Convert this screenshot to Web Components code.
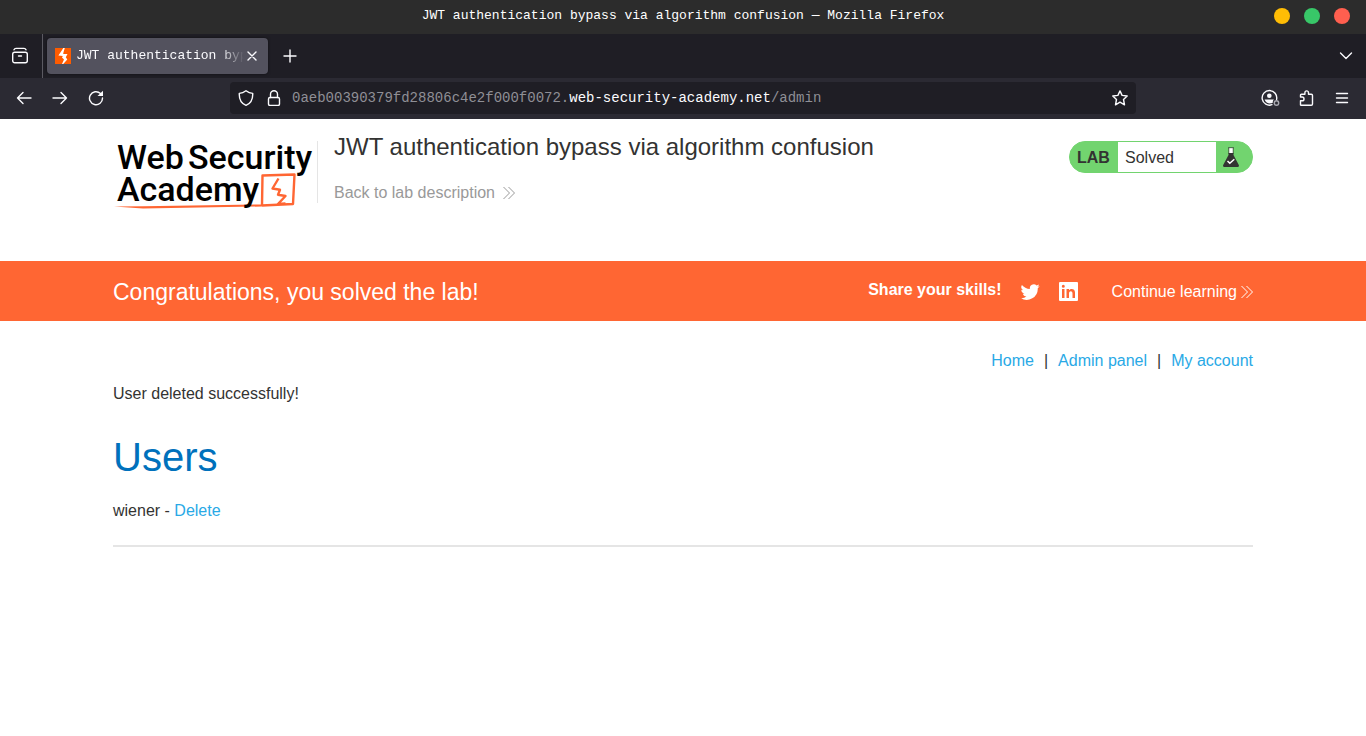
<!DOCTYPE html>
<html lang="en">
<head>
<meta charset="utf-8">
<title>JWT authentication bypass via algorithm confusion</title>
<style>
  html, body { margin: 0; }
  body { background: #fff; color: #333332; font: 16px/24px "Liberation Sans", Arial, sans-serif; }
</style>
</head>
<body>
<window-titlebar>JWT authentication bypass via algorithm confusion — Mozilla Firefox</window-titlebar>
<browser-tabs>JWT authentication bypass via algorithm confusion</browser-tabs>
<browser-toolbar><span slot="subdomain">0aeb00390379fd28806c4e2f000f0072.</span><span slot="host">web-security-academy.net</span><span slot="path">/admin</span></browser-toolbar>
<lab-header>
  <span slot="title">JWT authentication bypass via algorithm confusion</span>
  <lab-status slot="status">Solved</lab-status>
</lab-header>
<solved-banner>Congratulations, you solved the lab!</solved-banner>
<lab-content>
  <site-nav slot="nav"></site-nav>
  <span slot="message">User deleted successfully!</span>
  <user-row>wiener</user-row>
</lab-content>

<script>
const define = (name, html) => {
  const template = document.createElement('template');
  template.innerHTML = html;
  customElements.define(name, class extends HTMLElement {
    constructor() {
      super();
      this.attachShadow({ mode: 'open' }).append(template.content.cloneNode(true));
    }
  });
};

define('window-titlebar', `
<style>
  :host { display: grid; grid-template-columns: 1fr auto 1fr; align-items: center; box-sizing: border-box; height: 34px; padding: 0 16px 2px; background: #2c2c2c; color: #fff; font: 13px/20px "Liberation Mono", monospace; }
  .title { grid-column: 2; white-space: nowrap; }
  .controls { display: flex; gap: 14px; justify-content: flex-end; }
  button { width: 16px; height: 16px; padding: 0; border: 0; border-radius: 50%; }
  .min { background: #ffbd05; } .max { background: #38c768; } .close { background: #ff5f4f; }
</style>
<span class="title"><slot></slot></span>
<div class="controls"><button class="min" aria-label="Minimize"></button><button class="max" aria-label="Maximize"></button><button class="close" aria-label="Close"></button></div>`);

define('browser-tabs', `
<style>
  :host { display: flex; align-items: center; height: 44px; background: #1f1e25; color: #fbfbfe; font: 13px/20px "Liberation Mono", monospace; }
  button { display: grid; place-items: center; padding: 0; border: 0; background: none; color: inherit; }
  svg { display: block; fill: none; stroke: currentColor; stroke-width: 1.4; stroke-linecap: round; stroke-linejoin: round; }
  .view { width: 43px; height: 44px; padding-right: 2px; border-right: 1px solid #5b5a62; }
  .tab { display: flex; align-items: center; box-sizing: border-box; width: 221px; height: 36px; margin-left: 4px; padding: 0 8px; border-radius: 4px; background: #53525e; box-shadow: 0 0 3px #0008; }
  .label { flex: 1; min-width: 0; margin-left: 5px; overflow: hidden; white-space: nowrap; mask-image: linear-gradient(to left, transparent, #000 24px); }
  .tab button { width: 16px; height: 16px; }
  .add { width: 44px; height: 36px; }
  .list { width: 40px; height: 36px; margin-left: auto; }
</style>
<button class="view" aria-label="View recent browsing"><svg width="18" height="18" viewBox="0 0 18 18"><rect x="1.7" y="5.2" width="14.6" height="10.6" rx="2"/><path d="M3 2.8C3.4 1.8 4 1.4 5 1.4h8c1 0 1.600.4 2 1.400M7.500 9h3"/></svg></button>
<div class="tab">
  <svg width="16" height="16" viewBox="0 0 16 16" style="stroke:none"><path fill="#ff5c00" d="M0 0h16v16H0z"/><path fill="#fff" d="M8.300 0h1.500L8.500 4.300 8.200 6h4.300L10.800 9.300l1.500 2.200L8.200 16H7l2-4.500L7 9.500l.8-1.500L3.400 7.600 6.400 3z"/></svg>
  <span class="label"><slot></slot></span>
  <button aria-label="Close tab"><svg width="12" height="12" viewBox="0 0 12 12"><path d="m2 2 8 8M10 2l-8 8"/></svg></button>
</div>
<button class="add" aria-label="New tab"><svg width="14" height="14" viewBox="0 0 14 14"><path d="M7 1v12M1 7h12"/></svg></button>
<button class="list" aria-label="List all tabs"><svg width="14" height="8" viewBox="0 0 14 8"><path d="m1.500 1 5.500 5.500L12.500 1"/></svg></button>`);

define('browser-toolbar', `
<style>
  :host { display: grid; grid-template-columns: 1fr minmax(0, 906px) 1fr; align-items: center; box-sizing: border-box; height: 41px; padding: 0 8px 1px; background: #2b2a33; color: #fbfbfe; font: 14px/20px "Liberation Mono", monospace; }
  button { display: grid; place-items: center; width: 32px; height: 32px; padding: 0; border: 0; background: none; color: inherit; }
  svg { display: block; fill: none; stroke: currentColor; stroke-width: 1.4; stroke-linecap: round; stroke-linejoin: round; }
  .group { display: flex; gap: 4px; }
  .end { justify-content: flex-end; }
  .bar { display: flex; align-items: center; height: 32px; border-radius: 4px; background: #1f1e25; }
  .bar button + button { width: 24px; }
  .url { flex: 1; min-width: 0; padding-left: 6px; overflow: hidden; white-space: nowrap; color: #8f8f96; outline: 0; }
  .host { color: #fbfbfe; }
</style>
<div class="group">
  <button aria-label="Back"><svg width="16" height="16" viewBox="0 0 16 16"><path d="M15 8H1.500M7 2.500 1.500 8 7 13.500"/></svg></button>
  <button aria-label="Forward"><svg width="16" height="16" viewBox="0 0 16 16"><path d="M1 8h13.500M9 2.500 14.500 8 9 13.500"/></svg></button>
  <button aria-label="Reload"><svg width="16" height="16" viewBox="0 0 16 16"><path d="M12.500 3.500A6.500 6.500 0 1 0 14.500 8"/><path fill="currentColor" stroke="none" d="M15 .8V6H9.500z"/></svg></button>
</div>
<div class="bar">
  <button aria-label="Tracking protection"><svg width="16" height="16" viewBox="0 0 16 16"><path d="M8 .8c2 1.500 4 2.400 6.700 2.600C15 9.500 12.500 13.500 8 15.300 3.500 13.500 1 9.500 1.300 3.400 4 3.200 6 2.300 8 .8z"/></svg></button>
  <button aria-label="Site information"><svg width="16" height="16" viewBox="0 0 16 16"><rect x="2.500" y="7.500" width="11" height="8" rx="1.500"/><path d="M4.500 7.500V4.300a3.500 3.500 0 0 1 7 0v3.200"/></svg></button>
  <div class="url" role="textbox" contenteditable="true" aria-label="Address" spellcheck="false"><slot name="subdomain"></slot><span class="host"><slot name="host"></slot></span><slot name="path"></slot></div>
  <button aria-label="Bookmark this page"><svg width="16" height="16" viewBox="0 0 16 16"><path d="m8 .9 2.100 4.500 5.100.6-3.700 3.500 1 5.300L8 12.200l-4.500 2.600 1-5.300L.8 6l5.100-.6z"/></svg></button>
</div>
<div class="group end">
  <button aria-label="Account"><svg width="20" height="18" viewBox="0 0 20 18"><path d="M12 15.700a7.300 7.300 0 1 1 4.600-5.400"/><path fill="currentColor" stroke="none" d="M9.300 4.400a2.300 2.300 0 1 1 0 4.600 2.300 2.300 0 0 1 0-4.600zM4.600 10.500h9.400c-1 .8-1.300 2-1.200 3.200-3 1.500-7 .6-8.200-3.200z"/><circle cx="16.500" cy="14" r="2.200" stroke="#a8a8b0"/></svg></button>
  <button aria-label="Extensions"><svg width="16" height="16" viewBox="0 0 16 16"><path d="M3 15.300h10.200c.8 0 1.300-.5 1.300-1.300V5.500c0-.8-.4-1.200-1.200-1.200H10.500V2.700a1.800 1.800 0 0 0-3.600 0v1.600H3.500c-.7 0-1 .4-1 1V7h1.600a1.900 1.900 0 0 1 0 3.800H2.500V15z"/></svg></button>
  <button aria-label="Open application menu"><svg width="14" height="14" viewBox="0 0 14 14"><path d="M1.500 2.500h11M1.500 7h11M1.500 11.500h11"/></svg></button>
</div>`);

define('double-chevron', `
<style>:host { display: inline-block; } svg { display: block; fill: none; stroke: currentColor; stroke-width: 1; }</style>
<svg width="12" height="14" viewBox="0 0 12 14"><path d="m.5 1 6 6-6 6M5.500 1l6 6-6 6"/></svg>`);

define('academy-logo', `
<style>:host { display: block; } svg { display: block; } text { font: 500 34px Roboto, sans-serif; fill: #000; }</style>
<svg width="204" height="78" viewBox="0 0 204 78" role="img" aria-label="Web Security Academy">
  <path fill="#ff6633" d="M1 74.500 30 76.500 149 74.500V72.500L30 74.200z"/>
  <path fill="none" stroke="#ff6633" stroke-width="2.400" stroke-linejoin="round" d="m149 73.500.5-30L181.500 42.500l-1.500 29.500L149 73.500"/>
  <path fill="none" stroke="#ff6633" stroke-width="2.400" stroke-linejoin="round" d="m165.500 46.500-6 10 7.500 1.200-2 5 7.500 1.300-7.500 8 7.500-.6"/>
  <text x="4" y="37">Web</text><text x="75" y="37">Security</text><text x="4" y="69">Academy</text>
</svg>`);

define('lab-status', `
<style>
  :host { display: flex; box-sizing: border-box; width: 184px; height: 32px; border: 1px solid #72d46f; border-radius: 16px; overflow: hidden; background: #72d46f; line-height: 32px; }
  b { width: 41px; padding-left: 7px; }
  p { flex: 1; margin: 0; padding-left: 7px; background: #fff; }
  svg { display: block; width: 18px; height: 20px; margin: 5px 12px 0 6px; }
</style>
<b>LAB</b><p><slot></slot></p>
<svg viewBox="0 0 18 20"><path fill="#fff" d="M7 1h4v6H7z"/><path fill="#333332" d="M6.500 6h5v2l5.300 10c.5 1-.1 2-1.100 2H2.300c-1 0-1.600-1-1.100-2L6.500 8z"/><path stroke="#333332" stroke-width=".7" fill="none" d="M6 .7h6M6.800 1v6M11.200 1v6"/><path fill="none" stroke="#fff" stroke-width="1.500" d="m5.500 14 2.300 2.300 4.500-4"/></svg>`);

define('lab-header', `
<style>
  :host { display: block; padding: 13px 24px; }
  .container { display: flex; align-items: flex-start; max-width: 1140px; height: 116px; margin: 0 auto; }
  .divider { width: 1px; height: 62px; margin-top: 9px; background: #e5e5e5; }
  .text { flex: 1; padding-left: 16px; }
  h2 { margin: 0; font-size: 24px; line-height: 30px; font-weight: 400; }
  a { display: inline-flex; align-items: center; gap: 8px; margin-top: 19px; color: #999; text-decoration: none; }
  ::slotted(lab-status) { margin-top: 9px; }
</style>
<div class="container">
  <academy-logo></academy-logo>
  <div class="divider"></div>
  <div class="text"><h2><slot name="title"></slot></h2><a href="#lab">Back to lab description <double-chevron></double-chevron></a></div>
  <slot name="status"></slot>
</div>`);

define('solved-banner', `
<style>
  :host { display: block; padding: 0 24px; background: #ff6633; color: #fff; }
  .container { display: flex; align-items: center; box-sizing: border-box; max-width: 1140px; height: 60px; margin: 0 auto; padding-top: 1px; }
  h4 { flex: 1; margin: 0; font-size: 23px; line-height: 28px; font-weight: 400; }
  b { margin-right: 18px; padding-bottom: 4px; }
  a { color: inherit; text-decoration: none; }
  .social { margin-right: 19px; }
  .more { display: flex; align-items: center; gap: 4px; margin-left: 15px; }
  svg { display: block; fill: currentColor; }
</style>
<div class="container">
  <h4><slot></slot></h4>
  <b>Share your skills!</b>
  <a class="social" href="#twitter" aria-label="Twitter"><svg width="20" height="18" viewBox="0 2 24 20"><path d="M23.600 4.900c-.8.400-1.700.6-2.700.8 1-.6 1.700-1.500 2-2.600-.9.500-1.900.9-3 1.100a4.700 4.700 0 0 0-8 4.300C8 8.300 4.600 6.400 2.300 3.600a4.700 4.700 0 0 0 1.400 6.300c-.8 0-1.500-.2-2.100-.6a4.700 4.700 0 0 0 3.800 4.700c-.7.200-1.400.2-2.100.1.600 1.900 2.300 3.200 4.400 3.300A9.500 9.500 0 0 1 .9 19.300 13.300 13.300 0 0 0 21.300 7.400c.9-.7 1.700-1.500 2.300-2.500z"/></svg></a>
  <a class="social" href="#linkedin" aria-label="LinkedIn"><svg width="19" height="19" viewBox="0 0 19 19"><path fill-rule="evenodd" d="M1 0h17a1 1 0 0 1 1 1v17a1 1 0 0 1-1 1H1a1 1 0 0 1-1-1V1a1 1 0 0 1 1-1zM3 7v9h2.500V7zM4.300 2.800a1.500 1.500 0 1 0 0 3 1.500 1.500 0 0 0 0-3zM7.500 7v9H10v-4.500c0-2.800 3.500-3 3.500 0V16H16v-5.500c0-4-4.200-4.500-6-2.200V7z"/></svg></a>
  <a class="more" href="#learning">Continue learning <double-chevron></double-chevron></a>
</div>`);

define('site-nav', `
<style>
  :host { display: flex; justify-content: flex-end; gap: 10px; }
  a { color: #29a9e6; text-decoration: none; }
</style>
<a href="#home">Home</a><span>|</span><a href="#admin">Admin panel</a><span>|</span><a href="#account">My account</a>`);

define('user-row', `
<style>:host { display: block; } a { color: #29a9e6; text-decoration: none; }</style>
<slot></slot> - <a href="#delete">Delete</a>`);

define('lab-content', `
<style>
  :host { display: block; padding: 28px 24px; }
  main { max-width: 1140px; margin: 0 auto; }
  p { margin: 9px 0 0; }
  h1 { margin: 26px 0 17px; color: #0071bc; font-size: 40px; line-height: 50px; font-weight: 400; }
  hr { height: 2px; margin: 22px 0 0; border: 0; background: #e5e5e5; }
</style>
<main><slot name="nav"></slot><p><slot name="message"></slot></p><h1>Users</h1><slot></slot><hr></main>`);
</script>
</body>
</html>
